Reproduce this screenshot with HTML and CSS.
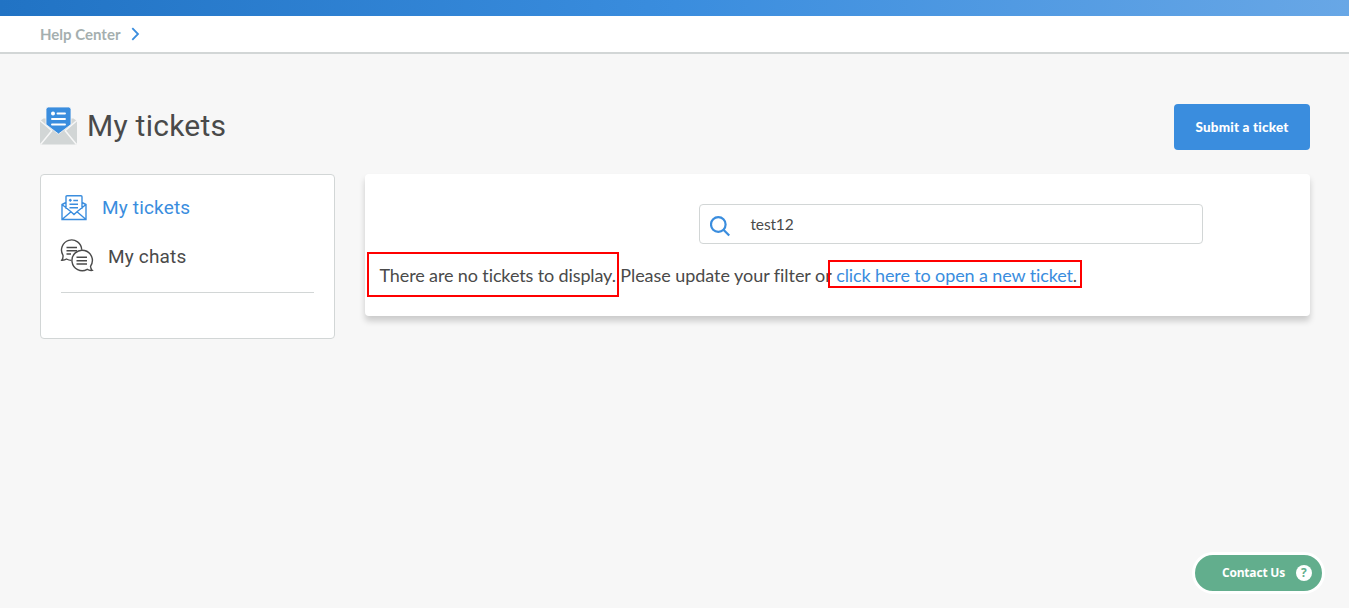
FILE: index.html
```html
<!DOCTYPE html>
<html lang="en">
<head>
<meta charset="utf-8">
<title>My tickets</title>
<link rel="stylesheet" href="styles.css">
</head>
<body>
<div class="topbar"></div>
<nav class="breadcrumb">
  <a class="crumb">Help Center</a>
  <svg class="chevron" width="9" height="14" viewBox="0 0 9 14"><path d="M1.300 1.200 7 7l-5.700 5.800"/></svg>
</nav>
<main class="page">
  <header class="heading">
    <svg class="heading-icon" width="37" height="38" viewBox="0 0 37 38">
      <path fill="#d2d6d6" d="M0 14 3.500 11.500h30L37 14v22.500a1 1 0 0 1-1 1H1a1 1 0 0 1-1-1Z"/>
      <path fill="none" stroke="#f7f7f7" stroke-width="1.500" d="M0 13.500 12 23.800M37 13.500 25 23.800M.5 37.500 12 23.500M25 23.500l11.500 14"/>
      <path fill="#3a8dde" stroke="#f7f7f7" stroke-width=".8" d="M8.500 0h20a2.500 2.500 0 0 1 2.500 2.500v15L18.500 27 6 17.500v-15A2.500 2.500 0 0 1 8.500 0Z"/>
      <circle cx="13" cy="6.500" r="2" fill="#fff"/>
      <path stroke="#fff" stroke-width="1.900" stroke-linecap="round" d="M17.500 6.500h7.500M12 12h13M12 17.500h13"/>
    </svg>
    <h1 class="title">My tickets</h1>
    <button class="submit">Submit a ticket</button>
  </header>
  <div class="columns">
    <aside class="sidebar">
      <a class="item active">
        <svg class="line-icon" width="26" height="26" viewBox="0 0 26 26">
          <path stroke-width="1.400" d="M5 14V1.700q0-1 1-1h14q1 0 1 1V14M5 7.500 1 9.500v15h24V9.500l-4-2M1 9.500l9 7.300L13 19.500l3-2.700 9-7.300M1 24.500l9-7.700M25 24.500l-9-7.700M12.300 5.500H17M8.500 9.200H17M8.500 12.700H17"/>
          <circle cx="9.300" cy="5.300" r="1" fill="currentColor"/>
        </svg>
        <span class="label">My tickets</span>
      </a>
      <a class="item">
        <svg class="line-icon" width="32" height="32" viewBox="0 0 32 32">
          <path stroke-width="1.400" d="M20.700 9.800A10.100 10.100 0 1 0 2 15.300Q2.300 18 .8 20.200 3.800 20.300 5.500 19q2.300 1.300 4.800 1.400M5.500 7.500h10.500M5.500 10.800h10.500M5.500 14h4.500"/>
          <path stroke-width="1.400" d="M29.500 26.300A10.200 10.200 0 1 0 26.200 29.300q2 1.400 5 1.100Q29.700 29 29.500 26.300ZM15.500 17.300h10.500M15.500 20.700h10.500M15.500 24h10.500"/>
        </svg>
        <span class="label">My chats</span>
      </a>
      <hr class="divider">
    </aside>
    <section class="panel">
      <div class="search">
        <svg class="search-icon" width="20" height="21" viewBox="0 0 20 21"><circle cx="8.300" cy="8.500" r="7.300"/><path d="m13.500 13.700 5.700 5.800"/></svg>
        <span class="query">test12</span>
      </div>
      <p class="message"><span class="empty">There are no tickets to display.</span> <span class="hint">Please update your filter or</span> <span class="link-phrase"><a class="link">click here to open a new ticket</a>.</span></p>
    </section>
  </div>
</main>
<div class="mark mark-empty"></div>
<div class="mark mark-link"></div>
<button class="contact"><span class="contact-label">Contact Us</span><span class="help">?</span></button>
</body>
</html>
```
FILE: styles.css
```css
* { box-sizing: border-box; }
body { margin: 0; height: 608px; overflow: hidden; background: #f7f7f7; color: #4a4a4a; font-family: Lato, sans-serif; font-variant-ligatures: none; }
.topbar { height: 16px; background: linear-gradient(90deg, #2173c4, #3a8dde 50%, #68a7e6); }
.breadcrumb { display: flex; align-items: center; gap: 11px; height: 38px; padding: 0 40px; background: #fff; border-bottom: 2px solid #d2d6d6; }
.crumb { font-size: 15px; font-weight: 700; line-height: 20px; color: #a5afaf; }
.chevron { fill: none; stroke: #3a8dde; stroke-width: 1.8; margin-top: -1px; }
.page { padding: 50px 39px 0 40px; }
.heading { display: flex; align-items: center; height: 46px; }
.heading-icon { margin-top: -2px; overflow: visible; }
.title { margin: -3px auto 0 10px; font: 400 30px/36px Roboto, sans-serif; letter-spacing: .25px; }
.submit { width: 136px; height: 46px; padding: 0; border: 0; border-radius: 4px; background: #3a8dde; color: #fff; font: 900 13.500px/20px Lato, sans-serif; letter-spacing: .17px; }
.columns { display: flex; align-items: flex-start; gap: 30px; margin-top: 24px; }
.sidebar { width: 295px; height: 165px; padding: 20px; border: 1px solid #d2d6d6; border-radius: 4px; background: #fff; }
.item { display: flex; align-items: center; gap: 15px; height: 26px; font: 400 19px/24px Roboto, sans-serif; }
.item + .item { margin-top: 20px; height: 32px; }
.item + .item .line-icon { margin-top: -2px; }
.active { color: #3a8dde; }
.line-icon { fill: none; stroke: currentColor; flex: none; overflow: visible; }
.label { letter-spacing: .17px; }
.divider { height: 1px; margin: 19px 0 0; border: 0; background: #d2d6d6; }
.panel { flex: 1; height: 142px; padding-top: 30px; border-radius: 4px; background: #fff; box-shadow: 0 5px 6px rgba(0,0,0,.18); }
.search { display: flex; align-items: center; gap: 20.500px; width: 504px; height: 40px; margin-left: 334px; padding-left: 10px; border: 1px solid #d2d6d6; border-radius: 4px; }
.search-icon { fill: none; stroke: #3a8dde; stroke-width: 2.200; margin-top: 4px; }
.query { font-size: 15.500px; line-height: 20px; letter-spacing: -.15px; }
.message { margin: 18px 0 0 14.500px; font-size: 18px; line-height: 26px; white-space: nowrap; letter-spacing: -.12px; }
.hint { letter-spacing: -.05px; }
.link { color: #3a8dde; }
.mark { position: absolute; border: 2px solid #f00; }
.mark-empty { left: 367px; top: 252px; width: 252px; height: 45px; }
.mark-link { left: 828px; top: 260px; width: 254px; height: 28px; }
.contact { position: absolute; left: 1192px; top: 552px; display: flex; align-items: center; width: 133px; height: 42px; padding: 0 0 0 27px; gap: 11px; border: 3px solid #fff; border-radius: 21px; background: #62ae8d; color: #fff; font: 700 12px/16px "Open Sans", sans-serif; }
.contact-label { letter-spacing: -.2px; }
.help { width: 16px; height: 16px; border-radius: 50%; background: #fff; color: #62ae8d; text-align: center; }
```
